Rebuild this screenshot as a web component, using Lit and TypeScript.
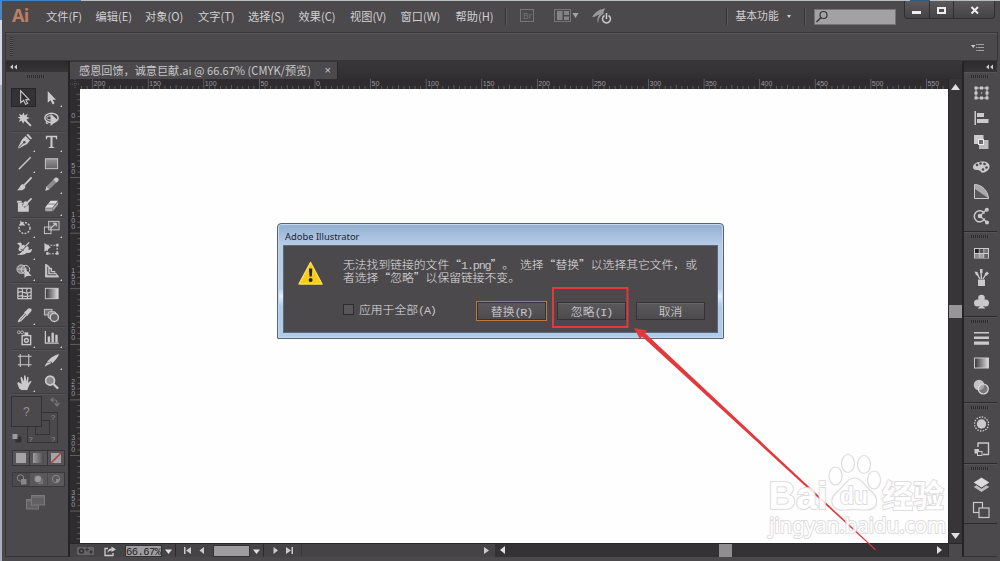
import { LitElement, html, svg, css } from "lit";
import { customElement } from "lit/decorators.js";

const menus = ["文件(F)", "编辑(E)", "对象(O)", "文字(T)", "选择(S)", "效果(C)", "视图(V)", "窗口(W)", "帮助(H)"];
const L = "#cbc9cb";

const stroke = (d: string, w = 1.2) => svg`<path d=${d} fill="none" stroke=${L} stroke-width=${w} stroke-linejoin="round"/>`;
const fill = (d: string, c = L) => svg`<path d=${d} fill=${c}/>`;
const icon = (body: unknown) => html`<svg class="ico" viewBox="0 0 18 18">
  <defs>
    <linearGradient id="g"><stop offset="0" stop-color="#353335"/><stop offset="1" stop-color="#e0dee0"/></linearGradient>
    <linearGradient id="v" x2="0" y2="1"><stop offset="0" stop-color="#969496"/><stop offset="1" stop-color="#666466"/></linearGradient>
  </defs>${body}</svg>`;

/* art, corner mark */
const tools: [unknown, boolean][] = [
  [svg`<path d="M5 2V14.5L8 12L10.200 16.300L12.300 15.200L10.200 11.300H13.800Z" fill="#2d2b2d" stroke="#d6d4d6" stroke-width="1.1"/>`, false],
  [fill("M5 2V14.5L8 12L10.200 16.300L12.300 15.200L10.200 11.300H13.800Z"), true],
  [svg`${fill("M8 1.500L9.100 4.700L12.500 3L11.200 6.200L14.500 7.300L11.200 8.700L12.500 12L9 10.500L7.500 13.500L6 10.300L3 11.500L4.500 8.300L1.500 7L4.600 6L3 3L6.400 4.600Z")}${stroke("M9.500 9.500L15.800 15.800", 2)}`, false],
  [svg`<ellipse cx="9" cy="7.300" rx="7" ry="5" fill="none" stroke=${L} stroke-width="1.6"/><ellipse cx="7.500" cy="7.300" rx="3.500" ry="2.200" fill="none" stroke=${L}/>${stroke("M4 11C2.500 13 4.500 14 5.500 12.500")}${fill("M8 3V16L15.500 9.500Z")}`, false],
  [svg`${fill("M10.200 3.200L14.800 8L11.800 11.600L3 16.500L2 15.500L6.300 7Z")}${fill("M11 2.200L12.700 0.700L17 5.500L15.500 7Z")}<path d="M3 15.500L8.300 10.200" stroke="#4b494b" fill="none"/><circle cx="8.800" cy="9.800" r="1.300" fill="#4b494b"/>`, true],
  [fill("M3 3H15V6.500H13.900L13.300 4.500H10.100V14.500L12 15.200V16H6V15.200L7.900 14.500V4.500H4.700L4.100 6.500H3Z"), true],
  [stroke("M3 15L15.500 2.500", 1.5), true],
  [svg`<rect x="2.500" y="4" width="13" height="10.500" fill="url(#v)" stroke=${L}/>`, true],
  [svg`${stroke("M16.500 1.500L8.500 10", 2)}${fill("M7.300 8.500L10 11C9.500 15 5 15.500 1 15C4 13.500 3.500 10 7.300 8.500Z")}`, false],
  [svg`${fill("M12 3L15.200 6.200L6.500 14.300L2.500 15.500L3.600 11.200Z", "#8e8c8e")}${fill("M11 3.800L12.800 1.800Q14.500 1 16 2.500Q17.200 4 16.200 5.300L14.200 7Z")}${fill("M3.600 11.200L2.500 15.500L6.500 14.300Z")}`, true],
  [svg`<path d="M2 6H8L6.500 8.500L9 11.500L13.500 8V15.500H2Z" fill=${L}/>${stroke("M16.500 1.500L11 7", 1.8)}${fill("M9.500 4.500C13 4 14 7.500 11 9.500C9.500 10.500 7.500 10.500 6.500 10C8.500 8.500 7 6 9.500 4.500Z")}${fill("M1 4H6V6H1Z")}`, false],
  [svg`${fill("M2 11.500L8 4H15.800L10 11.500Z", "#dedcde")}${fill("M2 11.800H10V15H2.500Z", "#a8a6a8")}${fill("M10.300 12L16 5V8L10.300 15Z", "#aaa8aa")}<path d="M5.500 7.500H13" stroke="#656365" stroke-width=".8"/>`, true],
  [svg`<circle cx="9" cy="9.500" r="5.800" fill="none" stroke=${L} stroke-width="1.500" stroke-dasharray="2 1.400"/>${fill("M4.500 1.500V7H10L8.200 5L6.600 3.800Z")}`, true],
  [svg`<rect x="6" y="2.500" width="11" height="9" fill="#5b595b" stroke=${L}/><rect x="1.500" y="8.500" width="7" height="7" fill="none" stroke=${L}/>${stroke("M8 10L14 4.500M10.500 4.500H14V8")}`, true],
  [svg`${fill("M1 3C4 .5 7 1.500 6 5C8 3 10 4 9.500 7C12 4 14.500 6 13 9.500L17 8.500C17 12 14 13.500 11.500 12.500C8 16 3 14 1 15C2.500 12.500 5 13 6.500 11C3 11 1.500 9 3.500 6.500C4.500 5 3 3.500 1 3Z")}<path d="M3.500 13.500L13.500 2.500M5 9L8 10" stroke="#4b494b" stroke-width="1" fill="none"/>${stroke("M10 5.500L14 1.500", 1.300)}`, true],
  [svg`<rect x="4.500" y="4.500" width="10.500" height="9" fill="none" stroke=${L} stroke-dasharray="2 1.300" stroke-width="1.300"/>${fill("M1.500 2V11.500L8.300 6.500Z")}${fill("M14 3H16.500V5.500H14ZM14 12H16.500V14.500H14ZM3.500 12H6V14.500H3.500Z")}`, false],
  [svg`<circle cx="5.500" cy="6.500" r="4.500" fill="#858385" stroke=${L}/><circle cx="10" cy="7" r="4.500" fill="none" stroke=${L}/><path d="M2 6.500H12" stroke=${L}/>${fill("M9 5.500V16L11.500 13.800L16.500 13.500Z")}`, true],
  [svg`${stroke("M3 1V14.500H16.500M6 3V11.500H14.500M9 5V9H13", 1.2)}${fill("M2.500 1L4.500 1.500L9 6V9H12L14 11.500L16.500 13.500V15H2.500Z", "#c4c2c4")}<path d="M5 4V12.500H14M7.500 6.500V10.300H12" fill="none" stroke="#4b494b"/>`, true],
  [svg`<rect x="2" y="3.500" width="14" height="11" fill="none" stroke=${L} stroke-width="1.300"/>${stroke("M2 8C7 4 9 12 16 7M6 3.500C9 7 5 10 7 14.500M12 3.500C9 7 14 9 12 14.500M2 12C6 10 10 14 16 11", 1.2)}`, false],
  [svg`<rect x="2.500" y="3.500" width="13.500" height="11" fill="url(#g)" stroke=${L}/>`, false],
  [svg`${stroke("M10 6.500L4 13L2.500 15.500L5 14.500L11.500 8", 1.4)}${fill("M8.500 5.500L10 4.500L13 1.500Q15 .800 16.500 2.500Q17 4 15.500 5.300L13 8L12 9.500Z")}`, true],
  [svg`<rect x="1.500" y="2.500" width="8" height="6" fill="#747274" stroke=${L}/><rect x="5.500" y="5" width="8" height="7" rx="1.500" fill="#858385" stroke=${L}/><circle cx="12" cy="11" r="4.300" fill="#656365" stroke=${L} stroke-width="1.500"/>`, false],
  [svg`<rect x="6.500" y="7" width="9" height="9.500" fill="none" stroke=${L} stroke-width="1.500"/><rect x="9" y="3.500" width="4" height="3.500" fill=${L}/><circle cx="11" cy="12" r="2" fill="none" stroke=${L} stroke-width="1.500"/><circle cx="3" cy="3.500" r="1.500" fill="none" stroke=${L} stroke-width=".8"/><circle cx="6.500" cy="3.500" r="1.500" fill="none" stroke=${L} stroke-width=".8"/>`, true],
  [svg`${stroke("M2.500 2V15H16.500", 1.3)}${fill("M5 8H7.500V14H5ZM9 4H11.500V14H9ZM13 6H15.500V14H13Z")}`, true],
  [svg`${stroke("M4.500 2V16M13.500 2V16M2 4.500H16.500M2 13.500H16.500", 1.1)}`, false],
  [svg`${fill("M17 2.500C12 3 6 7.500 4 11.500L8.500 10L10 12C13 9 15.500 6 17 2.500Z")}${fill("M3.500 12L8 10.700L8.500 12L1.500 15.500Z")}`, true],
  [svg`${fill("M3.500 15.500L6 17H12L14 12L16.500 8L15 7.300L12.800 9.500L13.300 3.500L12 3L11 8L10 1.500H8.500L8.300 8L6 3L4.700 3.700L6 10.500L2.500 8.500L1.300 9.800Z")}`, true],
  [svg`<circle cx="7.500" cy="7" r="4.700" fill="#8b898b" stroke=${L} stroke-width="1.800"/>${stroke("M11 10.500L16 15.500", 2.3)}`, false],
];
const ruled = new Set([1, 5, 8, 10, 11, 13]);

const dice = (x: number, y: number, c = L) => svg`<rect x=${x} y=${y} width="3.800" height="4" fill=${c}/>`;
const panels: { h: number; icons: unknown[] }[] = [
  { h: 160, icons: [
    svg`<rect x="4" y="4" width="11" height="10" fill="none" stroke=${L}/><circle cx="9.500" cy="9" r=".8" fill=${L}/>${fill("M2.500 2.500H5.500V5.500H2.500ZM8 2.500H11V5.500H8ZM13.500 2.500H16.500V5.500H13.500ZM2.500 12.500H5.500V15.500H2.500ZM8 12.500H11V15.500H8ZM13.500 12.500H16.500V15.500H13.500ZM2.500 7.500H5.500V10.500H2.500ZM13.500 7.500H16.500V10.500H13.500Z")}`,
    fill("M2.500 2H4V16H2.500ZM5 4H12V8H5ZM5 10H16.500V14H5Z"),
    svg`<rect x="2" y="2" width="9.500" height="9" fill=${L}/><rect x="7" y="7" width="9.500" height="9" fill="#bcbabc"/><rect x="6.500" y="6.500" width="5" height="5" fill="#6b696b" stroke="#eee"/>`,
    svg`<path d="M1 9C1 3 17 1 17.500 8C18 13 11 16 9 14C8 12.500 7 12 5 12C2 12 1 11 1 9Z" fill=${L}/>${[[5, 7], [8.500, 5.500], [12.500, 6], [14.500, 9.500], [11, 11.500]].map(p => svg`<circle cx=${p[0]} cy=${p[1]} r="1.300" fill="#4b494b"/>`)}`,
    svg`<path d="M2.500 1.500C10 1.500 16 8 16.500 15.500H2.500Z" fill="#a9a7a9" stroke=${L}/><path d="M3 15L16 15L3 6Z" fill="#3d3b3d" opacity=".75"/>`,
    svg`<path d="M12.800 11.500A5.500 5.500 0 1 1 12.500 6.500" fill="none" stroke=${L} stroke-width="1.500"/><circle cx="8" cy="9" r="2.300" fill=${L}/>${stroke("M8 9L14.500 2.500M8 9L15 15.500")}<circle cx="14.800" cy="2.800" r="2" fill=${L}/><circle cx="15" cy="15.500" r="2" fill=${L}/>`,
  ] },
  { h: 85, icons: [
    svg`<rect x="2" y="4" width="15" height="10.500" fill=${L}/><rect x="3" y="5" width="3.800" height="4" fill="#252325"/>${dice(7.600, 5, "#555355")}${dice(12.200, 5, "#777577")}${dice(3, 10, "#8c8a8c")}${dice(7.600, 10, "#a3a1a3")}${dice(12.200, 10, "#656365")}`,
    svg`${fill("M6 10.500H13V17H6Z")}${stroke("M9.500 10L9 2M8 10L5 5M11 10L14 5", 1.4)}${fill("M8 0H10.500V4H8ZM2.500 2.500L5.500 3L7 7L4 6ZM12.500 5L15 2.500L17 4.500L14 7Z")}`,
    svg`<circle cx="9.500" cy="5" r="3.300" fill=${L}/><circle cx="5.500" cy="10" r="3.500" fill=${L}/><circle cx="13.500" cy="10" r="3.500" fill=${L}/>${fill("M8.500 7H10.500L11 13L13.500 15.500H5.500L8 13Z")}`,
  ] },
  { h: 86, icons: [
    fill("M2 3H17V4.500H2ZM2 7.500H17V10H2ZM2 12.500H17V15.700H2Z"),
    svg`<rect x="2.500" y="4" width="14" height="10" fill="url(#g)" stroke=${L}/>`,
    svg`<circle cx="7" cy="7" r="5.300" fill="#c4c2c4"/><circle cx="11.300" cy="11" r="5" fill="#9a989a" fill-opacity=".6" stroke="#dddbdd" stroke-width="1.200"/>`,
  ] },
  { h: 61, icons: [
    svg`<circle cx="9.500" cy="9" r="4.700" fill=${L}/><circle cx="9.500" cy="9" r="7" fill="none" stroke=${L} stroke-width="1.300" stroke-dasharray="1.500 1.250"/>`,
    svg`${stroke("M6 7V3H16.500V14.500H11", 1.4)}<rect x="2.500" y="9" width="4.500" height="4.500" fill=${L}/><rect x="5.500" y="11.500" width="4.500" height="4" fill="#4b494b" stroke=${L}/>`,
  ] },
  { h: 60, icons: [
    svg`${fill("M9.500 1.500L17.300 6.500L9.500 11.500L1.700 6.500Z", "#dddbdd")}${fill("M1.700 11L4.500 9.300L9.500 12.700L14.500 9.300L17.300 11L9.500 16Z", "#bdbbbd")}`,
    svg`<rect x="1.500" y="1.500" width="9" height="10" fill="none" stroke=${L} stroke-width="1.200"/><rect x="7" y="7" width="10" height="9.500" fill="#4b494b" stroke=${L} stroke-width="1.200"/>`,
  ] },
];

const STEP = 55.58;
const hRuler = () => {
  const out = [];
  for (let i = -10; i <= 865 / (STEP / 10); i++) {
    const x = 12.3 + i * STEP / 10;
    if (x > 868 || x < -8) continue;
    const major = i % 10 === 0;
    out.push(svg`<rect x=${x} y=${major ? 0 : i % 5 === 0 ? 6 : 7} width=".8" height="10" fill="#6b696b"/>`);
    if (major && i >= 0) out.push(svg`<text x=${x + 1.400} y="7">${Math.abs(i / 10 - 4) * 50}</text>`);
  }
  return out;
};
const vRuler = () => {
  const out = [];
  for (let i = -5; i < 76; i++) {
    const y = 32.600 + i * STEP / 10;
    if (y < 1) continue;
    const major = i % 10 === 0;
    out.push(svg`<rect x=${major ? 0 : i % 5 === 0 ? 6.500 : 7.500} y=${y} width="10" height=".8" fill="#6b696b"/>`);
    if (major) {
      const s = String(i * 5);
      [...s].forEach((c, k) => out.push(svg`<text x="1.200" y=${y - 3.500 - (s.length - 1 - k) * 6}>${c}</text>`));
    }
  }
  return out;
};

@customElement("app-root")
export class AppRoot extends LitElement {
  static styles = css`
    * { box-sizing: border-box; }
    :host { display: block; width: 1000px; height: 561px; font-family: "Noto Sans CJK SC", sans-serif; color: #d2d0d2; }
    svg { display: block; flex: none; }
    .win { position: relative; width: 1000px; height: 561px; overflow: hidden; display: flex; flex-direction: column; padding: 1px 0 0 2px;
      background: linear-gradient(#4b494b, #4b494b) 2px 1px / 998px 560px no-repeat,
        linear-gradient(90deg, #4380c4 0 8.100%, #b8bec0 8.100% 91%, #315b78 91% 93%, #b8bec0 93%) 0 0 / 1000px 1px no-repeat,
        linear-gradient(#4f86c0 0 20px, #d3d8e2 20px 85px, #a9b1c3 85px); }
    .menubar { height: 31px; flex: none; display: flex; align-items: flex-start; }
    .ai { width: 40px; padding-left: 10px; font: bold 18px/28px "Open Sans", "Noto Sans", sans-serif; letter-spacing: -.7px; color: #bd7f63; }
    .menus { display: grid; grid-template-columns: 49.500px 49.500px 53px 50px 50.500px 51.500px 50.500px 55px 49px; padding-left: 4px; font-size: 11.200px; line-height: 30px; white-space: nowrap; }
    .vsep { width: 1px; height: 17px; margin-top: 7px; background: #333133; border-right: 1px solid #5d5b5d; box-sizing: content-box; }
    .apps { padding: 5px 0 0 12px; width: 219px; }
    .workspace { padding-left: 8px; width: 76px; font-size: 10.800px; line-height: 28px; display: flex; gap: 8px; }
    .down { width: 0; height: 0; border: 2.500px solid transparent; border-top: 3px solid #d2d0d2; border-bottom: 0; align-self: center; margin-top: 3px; }
    .search { width: 82px; height: 16px; margin: 8px 8px 0 8px; background: #a3a1a4; border: 1px solid #757375; }
    .winbtns { display: flex; width: 91px; height: 18px; border: 1px solid #302e30; border-top: 0; border-radius: 0 0 4px 4px; background: linear-gradient(#5b595b, #454345); }
    .winbtns svg + svg { border-left: 1px solid #302e30; }
    .control { height: 29px; flex: none; margin: 0 2px 0 3px; border: 1px solid #373537; box-shadow: inset 0 1px #5b595b; display: flex; justify-content: space-between; align-items: center; padding: 0 13px 0 4px; }
    .dots { width: 3px; height: 19px; background: repeating-linear-gradient(#353335 0 1px, #5a585a 1px 2px); }
    .work { display: flex; height: 496px; flex: none; padding: 0 2px 0 3px; }
    .tools { width: 63px; flex: none; border-left: 1px solid #353335; border-bottom: 1px solid #353335; }
    .cap { height: 11px; background: linear-gradient(#2d2b2e, #363437); display: flex; align-items: center; padding: 0 3px; }
    .cap.r { justify-content: flex-end; }
    .grip { height: 3px; width: 18px; background: repeating-linear-gradient(90deg, #2b292b 0 1px, #504e50 1px 2px); }
    .tgrip { margin: 3px 0 8px 21px; }
    .grid { display: grid; grid-template-columns: 27px 27px; padding-left: 5px; grid-template-rows: 22px 22.500px 22.500px 21px 21px 21.500px 22.500px 21.500px 21.500px 22px 22px 23px 22px 22px; }
    .tool { position: relative; display: flex; align-items: center; justify-content: center; }
    .tool.on::before { content: ""; position: absolute; inset: 2px 2px 1px 0; background: #343234; border: 1px solid #272527; }
    .tool .ico { position: relative; width: 17px; height: 17px; margin-right: 1px; }
    .tool.rule { box-shadow: 0 1px #403e40, 0 2px #555355; }
    .corner { position: absolute; right: 3px; bottom: 1px; border: 1.500px solid #d2d0d2; border-top-color: transparent; border-left-color: transparent; }
    .swatches { padding: 3px 0 0 4px; }
    .doc { width: 894px; display: flex; flex-direction: column; background: #343235; border-left: 2px solid #252326; }
    .tabs { height: 18px; flex: none; background: linear-gradient(#39373a, #302e31); }
    .tab { width: 268px; height: 17px; margin-top: 1px; background: #4b494b; border-right: 1px solid #29272a; padding-left: 9px; font-size: 11.130px; line-height: 17px; white-space: pre; display: flex; justify-content: space-between; padding-right: 6px; color: #c9c7c9; }
    .x { font: 11px/17px "Liberation Sans", sans-serif; }
    .mid { display: grid; grid-template-columns: 10px 868px 14px; grid-template-rows: 9.500px 454.500px; height: 464px; }
    .mid text { font: 7px "Liberation Sans", sans-serif; fill: #9b999b; }
    .ruler { background: #2e2c2f; }
    .canvas { background: #fefefe; }
    .vscroll { grid-column: 3; grid-row: 1 / 3; background: #373538; border-left: 1px solid #29272a; display: flex; flex-direction: column; align-items: center; justify-content: space-between; padding: 5px 0 4px; }
    .vthumb { height: 13px; width: 13px; background: #979597; }
    .foot { display: flex; height: 14px; align-items: center; border-top: 1px solid #29272a; }
    .nav { width: 425px; height: 13px; background: #454345; display: flex; align-items: center; }
    .field { height: 12px; background: #9e9c9f; color: #1e1c1e; font: 10.500px/13px "Liberation Mono", monospace; letter-spacing: -.55px; border: 1px solid #333; white-space: nowrap; overflow: hidden; }
    .hscroll { width: 453px; display: flex; align-items: center; justify-content: space-between; padding: 0 5px; }
    .hthumb { width: 13px; height: 13px; background: #8f8d8f; margin-left: 8px; }
    .sq { width: 14px; height: 13px; background: #4b494b; border-left: 1px solid #29272a; }
    .dock { width: 35px; flex: none; border-left: 2px solid #252326; border-bottom: 1px solid #353335; }
    .pgroup { border-bottom: 1px solid #2b292b; border-top: 1px solid #565456; padding-top: 2px; }
    .pgroup .grip { margin-left: 7px; margin-bottom: 2.500px; }
    .pic { height: 24.700px; display: flex; align-items: center; padding-left: 7.500px; }
    .pic .ico { width: 18px; height: 18px; }
    .dialog { position: absolute; left: 277px; top: 223px; width: 447px; height: 116px; border: 1px solid #59636e; border-radius: 4px 4px 1px 1px; padding: 0 5px 5px; background: linear-gradient(#91aed0, #b5cce8 20px, #b9cfe9 65px, #e3effb 72px, #aecbe9 82px, #aecdec); box-shadow: inset 0 0 0 1px #c5d8ed; }
    .title { height: 21px; font: 9.400px/25px "Noto Sans", sans-serif; color: #1b2430; padding-left: 2px; }
    .body { height: 88px; background: #4b494b; border: 1px solid #5e6876; display: grid; grid-template-columns: 59px 1fr; grid-template-rows: 53px 1fr; }
    .warn { padding: 15px 0 0 13px; }
    .msg { padding-top: 12px; font-size: 11.800px; white-space: nowrap; font-weight: 300; color: #e2e0e2; text-spacing-trim: space-all; font-feature-settings: "chws" 0, "halt" 0; }
    .msg div { height: 12.800px; line-height: 12.800px; }
    .m { font-family: "Liberation Mono", monospace; letter-spacing: -1.180px; color: #c8c6c8; white-space: pre; }
    .acts { grid-column: 1 / 3; display: flex; padding-left: 59px; font-size: 11.800px; font-weight: 300; color: #e2e0e2; align-items: flex-start; }
    .check { width: 11px; height: 11px; background: #59575a; border: 1px solid #2d2b2d; margin: 5px 5px 0 0; }
    .cl { width: 117px; line-height: 19px; }
    .btn { width: 69px; height: 18px; margin-top: 3px; border: 1px solid #343234; box-shadow: inset 0 1px #69676a; background: linear-gradient(#5a585b, #4d4b4e); text-align: center; line-height: 15px; white-space: nowrap; }
    .btn.main { width: 71px; height: 20px; margin: 2px 10px 0 0; border: 1px solid #b87b38; line-height: 17px; box-shadow: inset 0 0 0 1px #343234; }
    .btn.last { margin-left: 10px; }
    .over { position: absolute; left: 0; top: 0; }
    .wm text { fill: #fff; stroke: #dad8da; stroke-width: 2px; stroke-linejoin: round; paint-order: stroke; }
  `;

  private chevrons() {
    return html`<svg width="9" height="6" viewBox="0 0 9 6"><path d="M4 .500L1 3L4 5.500ZM8 .500L5 3L8 5.500Z" fill="#cbc9cb"/></svg>`;
  }

  private header() {
    return html`<div class="menubar">
      <div class="ai">Ai</div>
      <div class="menus">${menus.map(m => html`<span>${m}</span>`)}</div>
      <div class="vsep"></div>
      <div class="apps"><svg width="110" height="20" viewBox="0 0 110 20" fill="none">
        <rect x="1.500" y="3.500" width="13" height="12" stroke="#777577"/><text x="4" y="12.800" font-size="8.500" font-family="Liberation Sans" fill="#777577">Br</text>
        <rect x="35.500" y="3.500" width="16" height="12" stroke="#777577"/><path d="M38 5H43.500V14H38ZM45 5H50V9H45ZM45 10.500H50V14H45Z" fill="#858385"/><path d="M53.500 7H59.500L56.500 12Z" fill="#a5a3a5"/>
        <path d="M73 11C77 5 81 3 86.500 2.500C85 4 84.500 6 84.500 8C81 9 79 14 79.500 17C77.500 15 78.500 11 80.500 8.500C77.500 9.500 76 11.500 73 11Z" fill="#989698"/>
        <path d="M85.500 9.500A4 4 0 1 0 89.500 9.500M87.500 7V13" stroke="#cbc9cb" stroke-width="1.500"/></svg></div>
      <div class="vsep"></div>
      <div class="workspace">基本功能<i class="down"></i></div>
      <div class="vsep"></div>
      <div class="search"><svg width="16" height="14" viewBox="0 0 16 14"><circle cx="8.500" cy="5" r="3.500" fill="none" stroke="#353335" stroke-width="1.200"/><path d="M6 7.500L1.500 12" stroke="#353335" stroke-width="1.500"/></svg></div>
      <div class="winbtns">
        <svg width="24" height="17"><rect x="7" y="10" width="9" height="3" fill="#eee"/></svg>
        <svg width="24" height="17"><rect x="8" y="7" width="7" height="5" fill="none" stroke="#eee" stroke-width="2"/></svg>
        <svg width="41" height="17"><path d="M17.500 6L24 12.500M24 6L17.500 12.500" stroke="#eee" stroke-width="2"/></svg>
      </div>
    </div>
    <div class="control"><i class="dots"></i>
      <svg width="13" height="8" viewBox="0 0 13 8"><path d="M0 2H4.500L2.250 5Z" fill="#cbc9cb"/><path d="M5 1.500H6.500M7 1.500H13M5 4.500H6.500M7 4.500H13M5 7.500H6.500M7 7.500H13" stroke="#a3a1a3" stroke-width="1"/></svg>
    </div>`;
  }

  private toolbox() {
    return html`<div class="tools">
      <div class="cap">${this.chevrons()}</div>
      <div class="grip tgrip"></div>
      <div class="grid">${tools.map(([art, mark], i) => html`<div class="tool ${i === 0 ? "on" : ""} ${ruled.has(i >> 1) ? "rule" : ""}">${icon(art)}${mark ? html`<i class="corner"></i>` : ""}</div>`)}</div>
      <div class="swatches"><svg width="56" height="118" viewBox="0 0 56 118" fill="none" font-family="Liberation Sans">
        <rect x="17.500" y="16.500" width="30" height="30" stroke="#343234"/><rect x="25.500" y="24.500" width="14" height="14" stroke="#343234"/>
        <rect x="1.500" y=".5" width="30" height="30" fill="#4b494b" stroke="#333133"/>
        <g fill="#959395"><text x="13" y="20" font-size="12">?</text><text x="41" y="24" font-size="7.500">?</text><text x="18.500" y="45.500" font-size="7.500">?</text><text x="41" y="45.500" font-size="7.500">?</text></g>
        <path d="M42 4H45Q47 4 47 7V9M43.500 1.500L41 4L43.500 6M44.500 7L47 10L49.500 7" stroke="#777577" stroke-width="1.200"/>
        <rect x="6" y="41" width="5" height="5" fill="#333133" stroke="#333133"/><rect x="2.500" y="38" width="5" height="5" fill="#9c9a9c"/>
        <defs><linearGradient id="sg"><stop stop-color="#a09ea0"/><stop offset="1" stop-color="#4b494b"/></linearGradient></defs>
        <path d="M2.500 54.500H54.500V69.500H2.500ZM19.500 54.500V69.500M37.500 54.500V69.500" fill="#575557" stroke="#363436"/>
        <rect x="6" y="57" width="10" height="10" fill="#a6a4a6"/><rect x="23" y="57" width="11" height="10" fill="url(#sg)"/><rect x="41" y="57" width="10" height="10" fill="#a6a4a6"/><path d="M41 67L51 57" stroke="#b23c3c" stroke-width="1.500"/>
        <path d="M2.500 76.500H54.500V90.500H2.500Z" fill="#4b494b" stroke="#3a383a"/><path d="M20 77H37V90H20ZM38 77H54V90H38Z" fill="#5a585a"/>
        <circle cx="10.500" cy="82" r="3.200" stroke="#8a888a"/><rect x="11" y="83" width="5.500" height="5.500" fill="#888688"/>
        <rect x="28" y="83" width="5" height="5" fill="#777577"/><circle cx="28" cy="83" r="3.800" fill="#9a989a" stroke="#666466"/>
        <circle cx="46" cy="83" r="3.700" stroke="#8a888a"/><path d="M46 83H49V86H46Z" fill="#8a888a"/>
        <g stroke="#7b797b" fill="#626062"><rect x="16.500" y="103.500" width="12" height="9.500"/><path d="M17 105H28" /><rect x="21.500" y="99.500" width="13" height="9.500"/><path d="M22 101H34"/></g>
      </svg></div>
    </div>`;
  }

  private document() {
    return html`<div class="doc">
      <div class="tabs"><div class="tab"><span>感恩回馈，诚意巨献.ai @ 66.67% (CMYK/预览)</span><span class="x">×</span></div></div>
      <div class="mid">
        <svg class="ruler" width="10" height="9.500"><path d="M5 0V10M0 5H10" stroke="#5a585a" stroke-dasharray="1 1"/></svg>
        <svg class="ruler" width="868" height="9.500">${hRuler()}</svg>
        <div class="vscroll"><svg width="9" height="6"><path d="M0 6L4.500 0L9 6Z" fill="#e2e0e2"/></svg><div class="vthumb"></div><svg width="9" height="6"><path d="M0 0L4.500 6L9 0Z" fill="#e2e0e2"/></svg></div>
        <svg class="ruler" width="10" height="454.500">${vRuler()}</svg>
        <div class="canvas"></div>
      </div>
      <div class="foot">
        <div class="nav">
          <svg width="55" height="13" fill="none"><rect x="7" y="3" width="17" height="8" rx="1" fill="#656365"/><circle cx="11.500" cy="7" r="2" stroke="#333133" stroke-width="1.600" /><path d="M15 5.500H19M17 3.500V7.500M19 8H23M21 6V10" stroke="#333133"/>
            <path d="M38 4.500H35V11.500H43V9" stroke="#cbc9cb" stroke-width="1.300"/><path d="M37.500 9C37.500 6 39 4.500 41.500 4.500V2.500L46 5.500L41.500 8V6.500C39.500 6.500 38.500 7.500 37.500 9Z" fill="#cbc9cb"/></svg>
          <div class="field" style="width:37px">66.67%</div>
          <svg width="51" height="13"><path d="M3 5.500H10L6.500 10Z" fill="#e2e0e2"/><path d="M13.500 0V13" stroke="#2d2b2d"/><path d="M22 3H23.500V10H22ZM29 3V10L24 6.500ZM42 3V10L37.500 6.500Z" fill="#cbc9cb"/></svg>
          <div class="field" style="width:37px"></div>
          <svg width="245" height="13"><path d="M3 5.500H10L6.500 10Z" fill="#e2e0e2"/><path d="M13.500 0V13" stroke="#2d2b2d"/><path d="M23.500 3V10L28 6.500ZM36 3V10L41 6.500ZM41.500 3H43V10H41.500ZM234 3V10L239 6.500Z" fill="#cbc9cb"/><path d="M51.500 0V13" stroke="#3a383a"/></svg>
        </div>
        <div class="hscroll"><svg width="6" height="9"><path d="M5 0V8L0 4Z" fill="#e2e0e2"/></svg><div class="hthumb"></div><svg width="6" height="9"><path d="M0 0V8L5 4Z" fill="#e2e0e2"/></svg></div>
        <div class="sq"></div>
      </div>
    </div>`;
  }

  private dialog() {
    return html`<div class="dialog">
      <div class="title">Adobe Illustrator</div>
      <div class="body">
        <div class="warn"><svg width="27" height="25" viewBox="0 0 27 25"><path d="M13.500 1.500L25 23H2Z" fill="#f6cc1d" stroke="#f9de55" stroke-width="1.500" stroke-linejoin="round"/><path d="M12 7.500H15.300L14.800 15.500H12.500Z" fill="#252325"/><circle cx="13.600" cy="19" r="2" fill="#252325"/></svg></div>
        <div class="msg" lang="zh-CN"><div>无法找到链接的文件“<span class="m">1.png</span>”。<span class="m"> </span>选择“替换”以选择其它文件，或</div><div>者选择“忽略”以保留链接不变。</div></div>
        <div class="acts"><i class="check"></i><div class="cl">应用于全部<span class="m">(A)</span></div>
          <div class="btn main">替换<span class="m">(R)</span></div><div class="btn">忽略<span class="m">(I)</span></div><div class="btn last">取消</div></div>
      </div>
    </div>`;
  }

  private marks() {
    return html`<svg class="over" width="1000" height="561" viewBox="0 0 1000 561" fill="none">
      <rect x="553" y="288" width="74.500" height="39" stroke="#e2393d" stroke-width="2"/>
      <path d="M634 328L647 330.500L645 333L876 549.500L875 550L642 336.500L640 339Z" fill="#e2393d"/>
      <g class="wm" opacity=".88">
        <text x="768.500" y="508.500" font-family="Liberation Sans" font-weight="bold" font-size="38" textLength="59" lengthAdjust="spacingAndGlyphs">Bai</text>
        <g fill="#fff" stroke="#dad8da" stroke-width="1.200"><ellipse cx="835.500" cy="476" rx="6.500" ry="9"/><ellipse cx="848" cy="463.500" rx="6.500" ry="9"/><ellipse cx="864" cy="464.500" rx="6.500" ry="9"/><ellipse cx="874" cy="480" rx="6.500" ry="9"/>
          <path d="M855 478C862 478 865 487 871 491C880 499 878 510 866 510C859 510 852 509 846 510C832 512 828 501 836 493C844 486 847 478 855 478Z"/></g>
        <text x="840" y="504" font-family="Liberation Sans" font-weight="bold" font-size="23" textLength="28" lengthAdjust="spacingAndGlyphs">du</text>
        <text x="882" y="506.500" font-family="Noto Sans CJK SC" font-weight="bold" font-size="31" textLength="62">经验</text>
        <text x="769" y="533" font-family="Noto Sans" font-size="21" textLength="177" lengthAdjust="spacingAndGlyphs">jingyan.baidu.com</text>
      </g>
    </svg>`;
  }

  render() {
    return html`<div class="win">
      ${this.header()}
      <div class="work">
        ${this.toolbox()}
        ${this.document()}
        <div class="dock">
          <div class="cap r">${this.chevrons()}</div>
          ${panels.map(p => html`<div class="pgroup" style="height:${p.h}px"><div class="grip"></div>${p.icons.map(i => html`<div class="pic">${icon(i)}</div>`)}</div>`)}
        </div>
      </div>
      ${this.dialog()}
      ${this.marks()}
    </div>`;
  }
}
